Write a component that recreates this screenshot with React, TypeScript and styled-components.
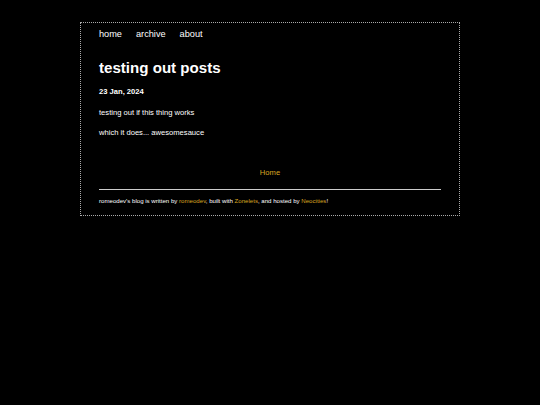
import styled, { createGlobalStyle } from "styled-components";

const GlobalStyle = createGlobalStyle`
	html, body {
		margin: 0;
		padding: 0;
		background: #000;
		color: #fff;
		font-family: "Liberation Sans", Arial, sans-serif;
	}
`;

const Container = styled.div`
	width: 342px;
	margin: 22px auto 0;
	padding: 5px 18px 10px;
	border: 1px dotted #aaa;
`;

const Nav = styled.nav`
	display: flex;
	gap: 14px;
	font-size: 9.2px;
	line-height: 12px;
`;

const NavLink = styled.a`
	color: #fff;
	text-decoration: none;
`;

const Title = styled.h1`
	margin: 19px 0 0;
	font-size: 15.1px;
	line-height: 18px;
	font-weight: bold;
`;

const PostDate = styled.h4`
	margin: 10px 0 0;
	font-size: 7.6px;
	line-height: 10px;
	font-weight: bold;
`;

const Paragraph = styled.p<{ $gap: number }>`
	margin: ${(p) => p.$gap}px 0 0;
	font-size: 7.6px;
	line-height: 10px;
`;

const BackLink = styled.div`
	margin-top: 29.5px;
	text-align: center;
	font-size: 7.6px;
	line-height: 10px;
`;

const Gold = styled.a`
	color: #daa520;
	text-decoration: none;
`;

const Rule = styled.hr`
	margin: 11.5px 0 0;
	border: none;
	height: 1px;
	background: #ccc;
`;

const Footer = styled.footer`
	margin-top: 7px;
	font-size: 6.1px;
	line-height: 8px;
`;

export default function App() {
	return (
		<>
			<GlobalStyle />
			<Container>
				<Nav>
					<NavLink href="#">home</NavLink>
					<NavLink href="#">archive</NavLink>
					<NavLink href="#">about</NavLink>
				</Nav>
				<Title>testing out posts</Title>
				<PostDate>23 Jan, 2024</PostDate>
				<Paragraph $gap={11}>testing out if this thing works</Paragraph>
				<Paragraph $gap={10}>which it does... awesomesauce</Paragraph>
				<BackLink>
					<Gold href="#">Home</Gold>
				</BackLink>
				<Rule />
				<Footer>
					romeodev's blog is written by <Gold href="#">romeodev</Gold>, built with{" "}
					<Gold href="#">Zonelets</Gold>, and hosted by <Gold href="#">Neocities</Gold>!
				</Footer>
			</Container>
		</>
	);
}
